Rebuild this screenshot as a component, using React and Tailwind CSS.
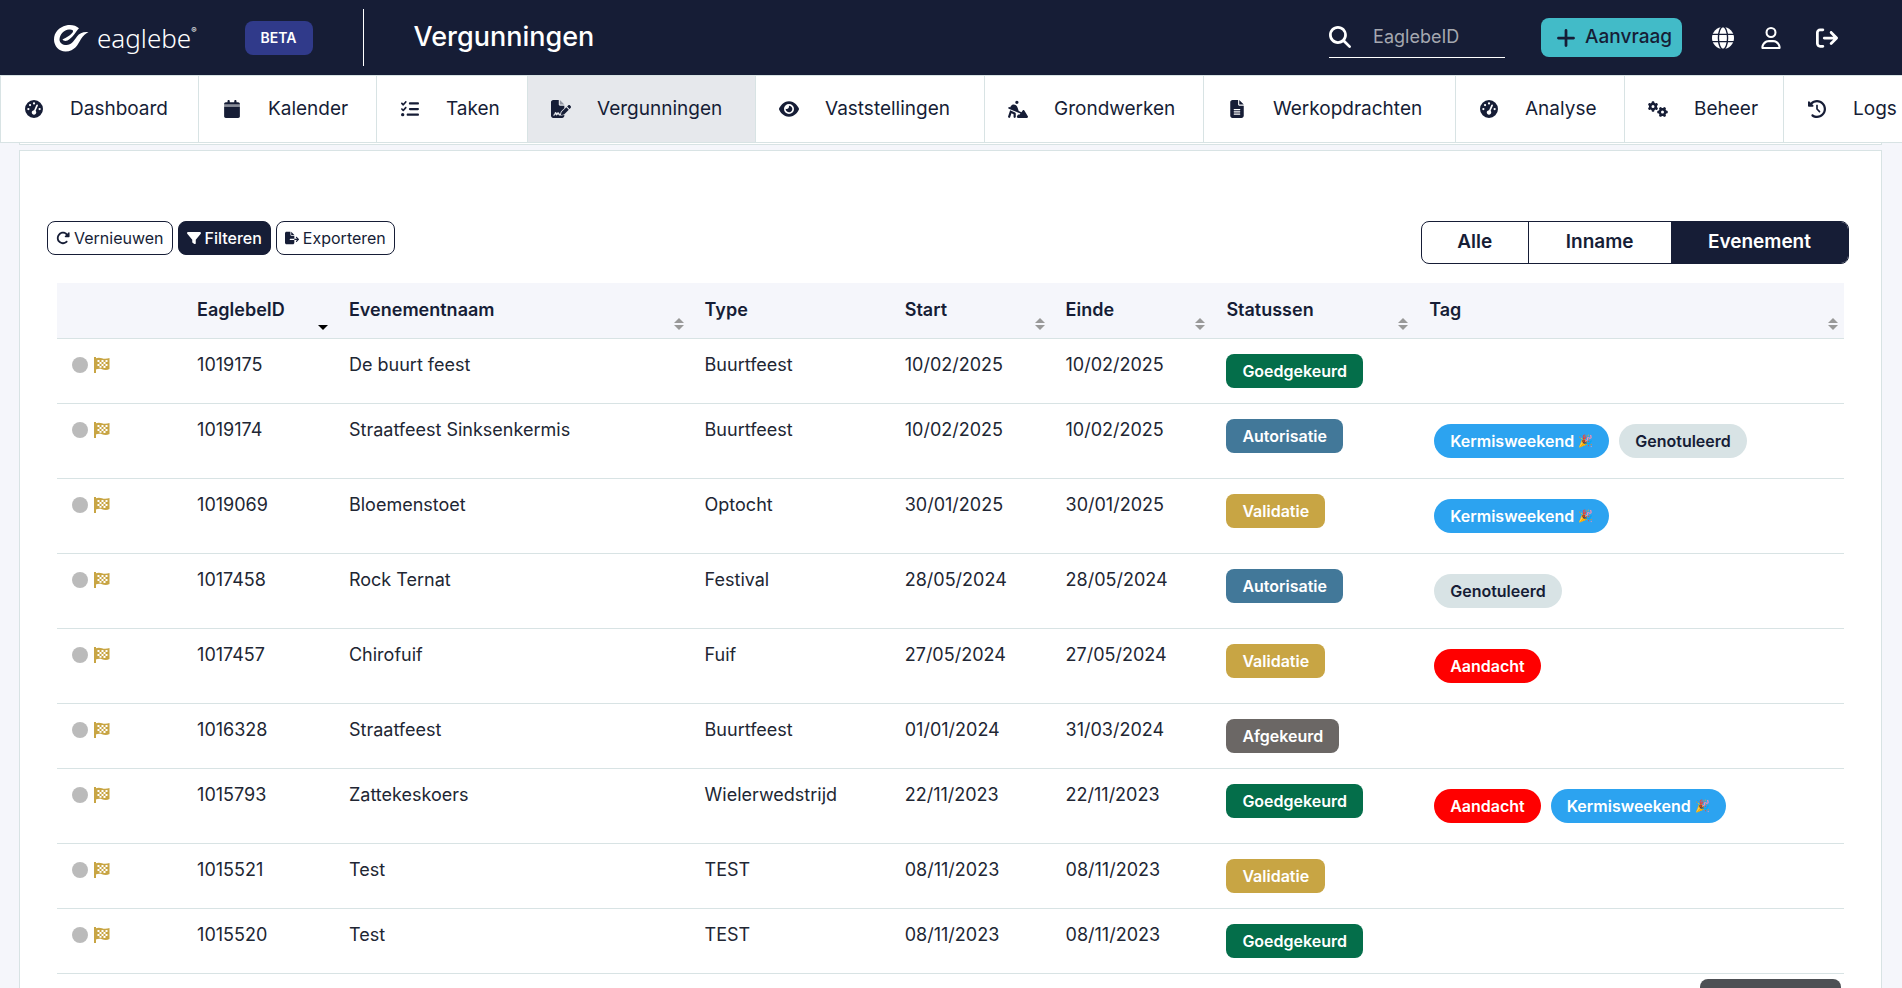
import { clsx } from "clsx";
import {
    FaArrowRightFromBracket,
    FaClockRotateLeft,
    FaEye,
    FaFileExport,
    FaFileLines,
    FaFilter,
    FaGaugeHigh,
    FaGears,
    FaListCheck,
    FaMagnifyingGlass,
    FaPersonDigging,
    FaPlus,
    FaRegUser,
    FaRotateRight,
} from "react-icons/fa6";

const navItems = [
    { label: "Dashboard", icon: FaGaugeHigh },
    { label: "Kalender", icon: CalendarIcon },
    { label: "Taken", icon: FaListCheck },
    { label: "Vergunningen", icon: FileSignatureIcon, active: true },
    { label: "Vaststellingen", icon: FaEye },
    { label: "Grondwerken", icon: FaPersonDigging },
    { label: "Werkopdrachten", icon: FaFileLines },
    { label: "Analyse", icon: FaGaugeHigh },
    { label: "Beheer", icon: FaGears },
    { label: "Logs", icon: FaClockRotateLeft },
];

const columns = [
    { label: "", width: "w-[7%]" },
    { label: "EaglebeID", width: "w-[8.5%]", sort: "desc" },
    { label: "Evenementnaam", width: "w-[19.9%]", sort: "both" },
    { label: "Type", width: "w-[11.2%]" },
    { label: "Start", width: "w-[9%]", sort: "both" },
    { label: "Einde", width: "w-[9%]", sort: "both" },
    { label: "Statussen", width: "w-[11.35%]", sort: "both" },
    { label: "Tag", width: "w-[24.05%]", sort: "both" },
];

const rows = [
    { id: "1019175", name: "De buurt feest", type: "Buurtfeest", start: "10/02/2025", end: "10/02/2025", status: "Goedgekeurd", tags: [] },
    { id: "1019174", name: "Straatfeest Sinksenkermis", type: "Buurtfeest", start: "10/02/2025", end: "10/02/2025", status: "Autorisatie", tags: ["Kermisweekend", "Genotuleerd"] },
    { id: "1019069", name: "Bloemenstoet", type: "Optocht", start: "30/01/2025", end: "30/01/2025", status: "Validatie", tags: ["Kermisweekend"] },
    { id: "1017458", name: "Rock Ternat", type: "Festival", start: "28/05/2024", end: "28/05/2024", status: "Autorisatie", tags: ["Genotuleerd"] },
    { id: "1017457", name: "Chirofuif", type: "Fuif", start: "27/05/2024", end: "27/05/2024", status: "Validatie", tags: ["Aandacht"] },
    { id: "1016328", name: "Straatfeest", type: "Buurtfeest", start: "01/01/2024", end: "31/03/2024", status: "Afgekeurd", tags: [] },
    { id: "1015793", name: "Zattekeskoers", type: "Wielerwedstrijd", start: "22/11/2023", end: "22/11/2023", status: "Goedgekeurd", tags: ["Aandacht", "Kermisweekend"] },
    { id: "1015521", name: "Test", type: "TEST", start: "08/11/2023", end: "08/11/2023", status: "Validatie", tags: [] },
    { id: "1015520", name: "Test", type: "TEST", start: "08/11/2023", end: "08/11/2023", status: "Goedgekeurd", tags: [] },
];

const statusColors = {
    Goedgekeurd: "bg-[#046e4a]",
    Autorisatie: "bg-[#427899]",
    Validatie: "bg-[#c8a544]",
    Afgekeurd: "bg-[#6b6765]",
};

const tagColors = {
    Kermisweekend: "bg-[#2ca3f0] text-white",
    Genotuleerd: "bg-[#d8e3e5] text-[#161d36]",
    Aandacht: "bg-[#ff0000] text-white",
};

function Logo() {
    return (
        <a href="#" className="flex items-center gap-2 text-white" aria-label="eaglebe">
            <svg viewBox="0 0 36 28" className="h-7 w-9" fill="currentColor">
                <path d="M26 4.300C23 1.500 18 .3 13 1.500C6 3.200 1 8.500 1 15.500C1 22 6 27.500 12.500 27.500C22 27.500 25 20 28 15C30 11.800 33 9.500 35.500 8C30 7.500 26.500 9 24 12.500C20.500 17 18.500 21 13.500 21C9.500 21 6.500 19 6.500 15.500C6.500 10.500 11 6 16 5.500C18.500 5.200 20.500 6 20 7.500C19 10.500 13 14 9.500 15.500C10.500 17 12.500 17.300 14.500 16.500C20 14 23 7 26 4.300Z" />
            </svg>
            <span className="flex items-start">
                <span className="font-[Noto_Sans,sans-serif] text-[26px] leading-7 font-light">eaglebe</span>
                <span className="text-[8px] leading-3">®</span>
            </span>
        </a>
    );
}

function CalendarIcon({ className }) {
    return (
        <svg viewBox="0 0 448 512" className={className} fill="currentColor">
            <path d="M96 32V64H48C21.500 64 0 85.500 0 112V130H448V112C448 85.500 426.500 64 400 64H352V32C352 14.300 337.700 0 320 0S288 14.300 288 32V64H160V32C160 14.300 145.700 0 128 0S96 14.300 96 32Z" />
            <path opacity=".5" d="M0 130H448V192H0Z" />
            <path d="M0 192H448V464C448 490.500 426.500 512 400 512H48C21.500 512 0 490.500 0 464Z" />
        </svg>
    );
}

function FileSignatureIcon({ className }) {
    return (
        <svg viewBox="0 0 576 512" className={className} fill="currentColor">
            <path d="M64 0C28.700 0 0 28.700 0 64V448C0 483.300 28.700 512 64 512H320C355.300 512 384 483.300 384 448V428.700L345 438C336 440 326 440 317 440H240C230 440 222 434 218 426L205 400L181 431C176 437 168 441 160 440C151 439 144 434 141 426L130 398L122 424C117 439 103 448 88 448H80C71 448 64 441 64 432S71 416 80 416H88C89 416 91 415 91 413L106 365C110 353 121 345 133 345C145 345 155 352 160 363L166 380L180 362C187 354 198 349 209 350C220 352 230 358 235 368L256 408H262L276 352C279 341 285 330 293 322L384 231V160H256C238.300 160 224 145.700 224 128V0Z" />
            <path opacity=".4" d="M256 0V128H384Z" />
            <path d="M550 153.700C534 138 509 138 493 153.700L464 183L535 254L564 225C580 209 580 184 564 168ZM311 335C307 339 304 344 303 350L288 410C287 415 288 421 292 425S302 431 308 429L368 414C373 413 378 410 383 406L512 276L441 205Z" />
        </svg>
    );
}

function GlobeIcon({ className }) {
    return (
        <svg viewBox="0 0 24 24" className={className}>
            <circle cx="12" cy="12" r="12" fill="currentColor" />
            <g fill="none" stroke="#161d36" strokeWidth="1.500">
                <ellipse cx="12" cy="12" rx="5" ry="12.500" />
                <path d="M0 8H24M0 16H24" />
            </g>
        </svg>
    );
}

function FlagIcon() {
    return (
        <svg viewBox="0 0 16 16" className="size-4" fill="#c8a544">
            <path d="M0 0H2V16H0Z" />
            <path d="M1 1.500C4 .3 6 .5 8 1.300S13 2 15.500 1V12C13 13.300 10 13 8 12.200S4 11.700 1 12.800Z" />
            <path
                fill="#fff"
                d="M3.500 3H5.500V5H3.500ZM7.500 3H9.500V5H7.500ZM11.500 3H13.500V5H11.500ZM5.500 5H7.500V7H5.500ZM9.500 5H11.500V7H9.500ZM3.500 7H5.500V9H3.500ZM7.500 7H9.500V9H7.500ZM11.500 7H13.500V9H11.500ZM5.500 9H7.500V10.700H5.500ZM9.500 9H11.500V11H9.500Z"
            />
        </svg>
    );
}

function SortIcon({ sort }) {
    return (
        <svg viewBox="0 0 10 12" className="absolute right-1.5 bottom-2 h-3 w-2.5">
            {sort === "both" && <path d="M5 0L10 5H0Z" fill="#999" />}
            <path d="M0 7H10L5 12Z" fill={sort === "both" ? "#999" : "#000"} />
        </svg>
    );
}

function Header() {
    return (
        <header className="flex h-[75px] shrink-0 items-center justify-between bg-[#161d36] pr-16 pl-[53px] text-white">
            <div className="flex items-center">
                <Logo />
                <span className="ml-12 rounded-lg bg-[#303a8a] px-4 py-2 text-sm leading-[18px] font-semibold">BETA</span>
                <div className="ml-[50px] h-[57px] w-px bg-white" />
                <h1 className="ml-[50px] text-[27px] font-medium">Vergunningen</h1>
            </div>
            <div className="flex items-center">
                <label className="flex h-10 w-44 items-center gap-[22px] border-b border-white">
                    <FaMagnifyingGlass className="size-[22px] shrink-0" />
                    <input type="text" placeholder="EaglebeID" aria-label="EaglebeID" className="w-full min-w-0 text-lg outline-none placeholder:text-[#a5a8b0]" />
                </label>
                <button className="ml-9 flex h-[39px] items-center gap-2 rounded-lg bg-[#42bbc8] pr-2.5 pl-3.5 text-[19px] font-medium text-[#161d36]">
                    <FaPlus className="size-[22px]" />
                    Aanvraag
                </button>
                <button className="ml-[30px]" aria-label="Taal">
                    <GlobeIcon className="size-[22px]" />
                </button>
                <button className="ml-[26px]" aria-label="Profiel">
                    <FaRegUser className="size-[22px]" />
                </button>
                <button className="ml-[34px]" aria-label="Afmelden">
                    <FaArrowRightFromBracket className="size-[22px]" />
                </button>
            </div>
        </header>
    );
}

function Nav() {
    return (
        <nav className="grid h-[68px] shrink-0 grid-cols-[198fr_178fr_151fr_228fr_229fr_219fr_252fr_169fr_159fr_118fr] border-y border-l border-[#d8e3e4] bg-white">
            {navItems.map(({ label, icon: Icon, active }) => (
                <a
                    key={label}
                    href="#"
                    className={clsx(
                        "flex min-w-0 items-center gap-[26px] border-r border-[#d8e3e4] pl-[23px] text-[19px] whitespace-nowrap last:border-r-0",
                        active && "bg-[#e6e8ec]"
                    )}
                >
                    <Icon className="h-[18px] w-5 shrink-0" />
                    {label}
                </a>
            ))}
        </nav>
    );
}

function Toolbar() {
    const button = "flex h-[34px] items-center gap-1 rounded-lg border border-[#161d36] px-2";
    return (
        <div className="flex items-start justify-between pr-8 pl-[27px]">
            <div className="flex gap-[5px] text-base">
                <button className={button}>
                    <FaRotateRight className="size-3.5" />
                    Vernieuwen
                </button>
                <button className={clsx(button, "bg-[#161d36] font-medium text-white")}>
                    <FaFilter className="size-3.5" />
                    Filteren
                </button>
                <button className={button}>
                    <FaFileExport className="size-3.5" />
                    Exporteren
                </button>
            </div>
            <div className="grid h-[43px] w-[428px] grid-cols-[106fr_144fr_178fr] overflow-hidden rounded-lg border border-[#161d36] text-[19px] font-semibold">
                <button>Alle</button>
                <button className="border-l border-[#161d36]">Inname</button>
                <button className="bg-[#161d36] text-white">Evenement</button>
            </div>
        </div>
    );
}

function PermitTable() {
    return (
        <div className="mt-[19px] px-[37px]">
            <table className="w-full table-fixed border-collapse text-left text-lg leading-[22px]">
                <thead>
                    <tr className="h-[55px] border-b border-[#d8e3e4] bg-[#f5f6fb]">
                        {columns.map((column) => (
                            <th key={column.label} className={clsx(column.width, "relative px-[15px] pt-4 align-top font-semibold")}>
                                {column.label}
                                {column.sort && <SortIcon sort={column.sort} />}
                            </th>
                        ))}
                    </tr>
                </thead>
                <tbody>
                    {rows.map((row) => (
                        <tr key={row.id} className="border-b border-[#d8e3e4] align-top text-[#212633] *:px-[15px] *:py-[15px]">
                            <td>
                                <div className="flex h-[22px] items-center gap-1.5">
                                    <span className="size-4 rounded-full bg-[#bbb]" />
                                    <FlagIcon />
                                </div>
                            </td>
                            <td>{row.id}</td>
                            <td>{row.name}</td>
                            <td>{row.type}</td>
                            <td>{row.start}</td>
                            <td>{row.end}</td>
                            <td>
                                <span className={clsx("flex h-[34px] w-max items-center rounded-lg px-4 text-base font-semibold text-white", statusColors[row.status])}>
                                    {row.status}
                                </span>
                            </td>
                            <td>
                                {row.tags.length > 0 && (
                                    <div className="flex gap-2.5 p-[5px]">
                                        {row.tags.map((tag) => (
                                            <span key={tag} className={clsx("flex h-[34px] items-center gap-1 rounded-full px-4 text-base font-semibold", tagColors[tag])}>
                                                {tag}
                                                {tag === "Kermisweekend" && <span className="text-xs">🎉</span>}
                                            </span>
                                        ))}
                                    </div>
                                )}
                            </td>
                        </tr>
                    ))}
                </tbody>
            </table>
        </div>
    );
}

export default function App() {
    return (
        <div className="flex h-screen flex-col overflow-hidden bg-[#f5f6fb] font-[Inter,sans-serif] text-[#161d36]">
            <Header />
            <Nav />
            <main className="flex min-h-0 grow flex-col pr-5 pl-[19px]">
                <div className="h-0.5 shrink-0 border-x border-b border-[#d8e3e4] bg-white" />
                <section className="mt-[5px] grow border border-b-0 border-[#d8e3e4] bg-white pt-[70px]">
                    <Toolbar />
                    <PermitTable />
                </section>
            </main>
            <div className="fixed right-[61px] bottom-0 h-[9px] w-[141px] rounded-t-lg bg-[#4d5054]" />
        </div>
    );
}
